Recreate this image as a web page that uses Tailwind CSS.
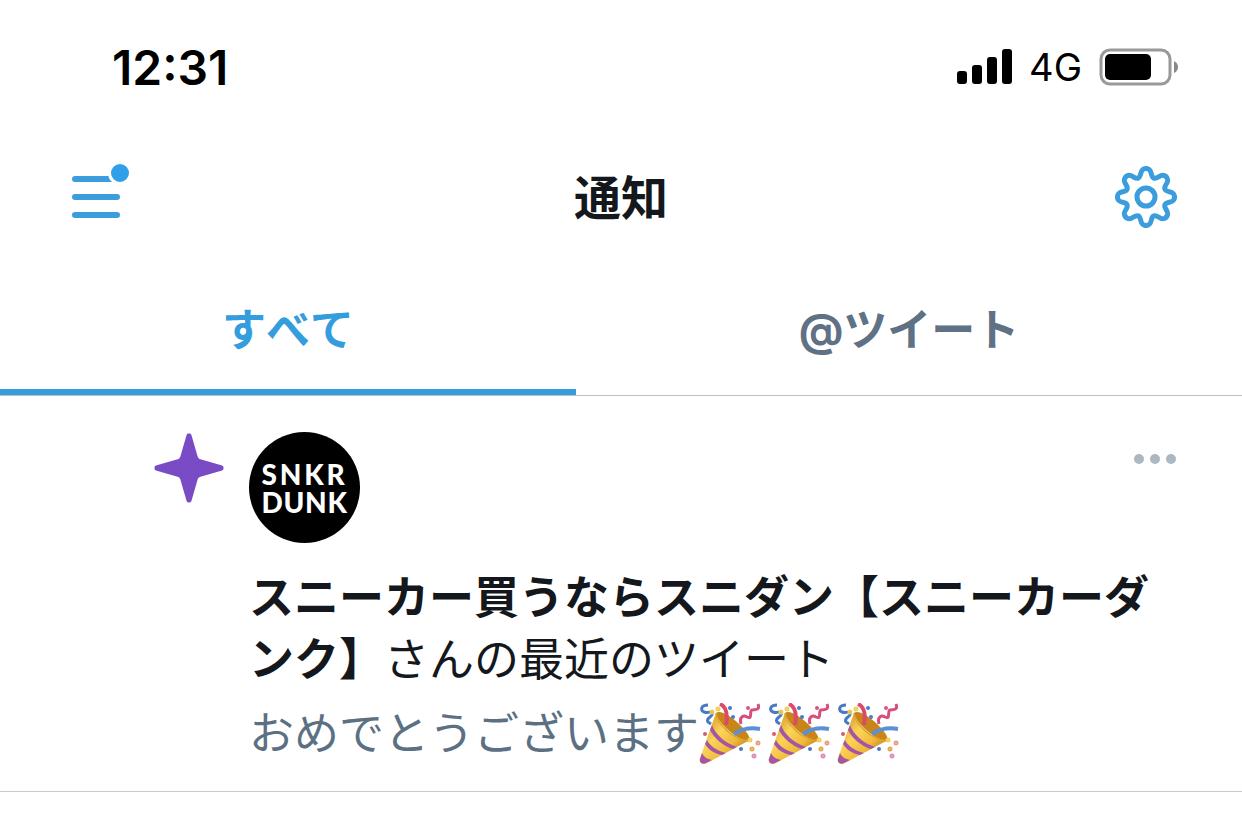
<!DOCTYPE html>
<html lang="ja">
<head>
  <meta charset="UTF-8">
  <meta name="viewport" content="width=device-width, initial-scale=1.0">
  <title>通知</title>
  <script src="https://cdn.jsdelivr.net/npm/@tailwindcss/browser@4"></script>
</head>
<body class="bg-white text-[#14171c] font-['Inter','Noto_Sans_CJK_JP',sans-serif]">
  <!-- shared shapes -->
  <svg class="absolute size-0" aria-hidden="true">
    <linearGradient id="cone" x1="0" y1="0.3" x2="0.7" y2="1">
      <stop offset="0" stop-color="#d9a02c"/>
      <stop offset="0.35" stop-color="#fbd458"/>
      <stop offset="0.7" stop-color="#f1b93a"/>
      <stop offset="1" stop-color="#b87a1c"/>
    </linearGradient>
    <symbol id="popper" viewBox="0 0 62 62">
      <path d="M17 10C21 6 34 14 43 24C51 32 52 37 49 38C40 38 18 20 17 10Z" fill="#c98518"/>
      <path d="M17 10C18 21 34 36 49 38L8 60C4 63 -1 59 1 55Z" fill="url(#cone)"/>
      <path d="M13 22C16 31 26 40 38 44L34 46C24 43 15 35 11 27Z" fill="#a455a6"/>
      <path d="M8 37C11 43 18 48 27 50L23 52C14 50 9 46 6 41Z" fill="#a455a6"/>
      <path d="M3 50C5 54 8 56 13 57L7 60C3 62 0 59 1 56Z" fill="#a455a6"/>
      <path d="M17 10C18 21 34 36 49 38" fill="none" stroke="#dfa42c" stroke-width="1.5"/>
      <g fill="none" stroke-width="4">
        <path d="M21 1C28 4 29 11 27 22" stroke="#dc4a6a"/>
        <path d="M35 31C43 26 50 24 61 26" stroke="#5b8fd6"/>
        <path d="M9 2C2 2 1 7 5 9C10 11 12 7 13 10C15 14 6 14 9 19L12 21" stroke="#4779c4" stroke-width="3"/>
        <path d="M42 21C40 13 45 12 48 14C54 17 50 8 53 7C58 7 61 6 59 1" stroke="#d84d7c" stroke-width="3"/>
      </g>
      <g fill="#4b78c8"><circle cx="31" cy="5" r="2"/><circle cx="34" cy="14" r="2"/><circle cx="42" cy="46" r="2"/></g>
      <g fill="#d65a75"><circle cx="49" cy="5" r="2"/><circle cx="6" cy="31" r="2"/></g>
      <g fill="none" stroke-width="2"><circle cx="13" cy="9" r="1.5" stroke="#edcf53"/><circle cx="19" cy="6" r="1.5" stroke="#edcf53"/><circle cx="51" cy="37" r="1.5" stroke="#edcf53"/><circle cx="59" cy="40" r="1.5" stroke="#e2a083"/><circle cx="53" cy="46" r="1.5" stroke="#e4a94c"/><circle cx="55" cy="53" r="1.5" stroke="#df8cb8"/></g>
    </symbol>
    <path id="tooth" d="M0 -28.5C7 -28.5 3.8 -20.6 7.8 -18.9C11.8 -17.2 15.2 -25.1 20.15 -20.15"/>
  </svg>

  <div class="flex items-center justify-between h-[136px] pl-28 pr-16 text-black">
    <time class="text-5xl font-semibold">12:31</time>
    <div class="flex items-center gap-4 pb-0.5">
      <svg class="w-14 h-9" viewBox="0 0 56 36" role="img" aria-label="電波">
        <rect x="0" y="22" width="10" height="13" rx="3"/>
        <rect x="15" y="16" width="10" height="19" rx="3"/>
        <rect x="30" y="8" width="10" height="27" rx="3"/>
        <rect x="45" y="0" width="10" height="35" rx="3"/>
      </svg>
      <span class="text-[38px]">4G</span>
      <svg class="w-20 h-10" viewBox="0 0 80 40" role="img" aria-label="バッテリー">
        <rect x="3" y="3" width="69" height="34" rx="9" fill="none" stroke="#999" stroke-width="3"/>
        <rect x="7" y="7" width="46" height="26" rx="5"/>
        <path d="M76 14Q80 16 80 20T76 26Z" fill="#888"/>
      </svg>
    </div>
  </div>

  <header class="grid grid-cols-[1fr_auto_1fr] items-center h-[122px] px-16">
    <button aria-label="メニュー" class="justify-self-start pl-2">
      <svg class="w-[58px] h-[66px]" viewBox="0 0 58 66" fill="none" stroke="#3b9ddd" stroke-width="6" stroke-linecap="round">
        <path d="M3 15H45M3 33H45M3 51H45"/>
        <circle cx="48" cy="9" r="10.5" fill="#2f9fe8" stroke="#fff" stroke-width="3"/>
      </svg>
    </button>
    <h1 class="pt-0.5 text-[47px] font-bold">通知</h1>
    <button aria-label="設定" class="justify-self-end">
      <svg class="size-16" viewBox="-32 -32 64 64" fill="none" stroke="#3b9ddd" stroke-width="5" stroke-linecap="round">
        <use href="#tooth"/>
        <use href="#tooth" transform="rotate(45)"/>
        <use href="#tooth" transform="rotate(90)"/>
        <use href="#tooth" transform="rotate(135)"/>
        <use href="#tooth" transform="rotate(180)"/>
        <use href="#tooth" transform="rotate(225)"/>
        <use href="#tooth" transform="rotate(270)"/>
        <use href="#tooth" transform="rotate(315)"/>
        <circle r="9"/>
      </svg>
    </button>
  </header>

  <nav class="grid grid-cols-[576fr_666fr] h-[138px] border-b border-[#bfbfc1] text-[44px] font-bold [font-kerning:none]">
    <a href="#all" class="flex items-center justify-center pt-3 border-b-6 border-[#349ddd] text-[#349ddd]">すべて</a>
    <a href="#mentions" class="flex items-center justify-center pt-3 border-b-6 border-transparent text-[#5f7185]">@ツイート</a>
  </nav>

  <main>
    <article class="flex items-start gap-6 pl-[153px] pr-16 pt-9 pb-[26px] border-b border-[#c9cacc]">
      <svg class="size-[72px] shrink-0" viewBox="0 0 72 72" fill="#794bc4" stroke="#794bc4" stroke-width="4" stroke-linejoin="round" aria-hidden="true">
        <path d="M35.5 3.5H36.5L43 26Q44 28 46 29L68.5 35.5V36.5L46 43Q44 44 43 46L36.5 68.5H35.5L29 46Q28 44 26 43L3.5 36.5V35.5L26 29Q28 28 29 26Z"/>
      </svg>
      <div class="flex-1 min-w-0">
        <div class="flex items-start justify-between">
          <a href="#snkrdunk" class="flex flex-col items-center justify-center size-[111px] rounded-full bg-black text-white text-[28px] leading-7 font-black font-['Lato',sans-serif]">
            <span class="tracking-widest">SNKR</span>
            <span class="tracking-wide">DUNK</span>
          </a>
          <button aria-label="その他" class="pt-5">
            <svg class="w-11 h-4" viewBox="0 0 44 16" fill="#abb8c2">
              <circle cx="5" cy="7" r="5"/>
              <circle cx="21" cy="7" r="5"/>
              <circle cx="37" cy="7" r="5"/>
            </svg>
          </button>
        </div>
        <p class="pt-6 text-[45px] leading-[62px]"><b>スニーカー買うならスニダン【スニーカーダンク】</b>さんの最近のツイート</p>
        <div class="flex items-center pt-3 text-[45px] leading-[62px] text-[#5b7083]">
          <p>おめでとうございます</p>
          <div class="flex gap-[7px]">
            <svg class="size-[62px]" role="img" aria-label="🎉"><use href="#popper"/></svg>
            <svg class="size-[62px]" role="img" aria-label="🎉"><use href="#popper"/></svg>
            <svg class="size-[62px]" role="img" aria-label="🎉"><use href="#popper"/></svg>
          </div>
        </div>
      </div>
    </article>
  </main>
</body>
</html>
